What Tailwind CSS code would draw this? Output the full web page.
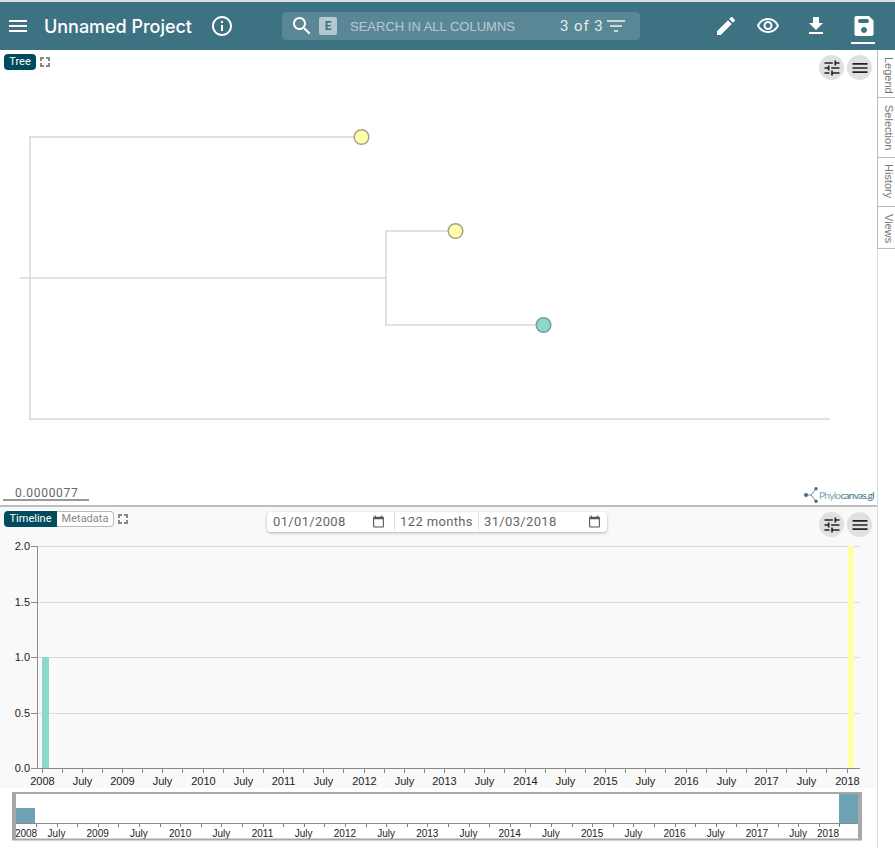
<!DOCTYPE html>
<html lang="en">
<head>
  <meta charset="UTF-8" />
  <title>Unnamed Project</title>
  <script src="https://cdn.jsdelivr.net/npm/@tailwindcss/browser@4"></script>
</head>
<body class="bg-white overflow-hidden font-['Roboto',sans-serif]">
<div class="w-[895px] h-[848px] flex flex-col">
  <div class="h-[2px] bg-[#d8dde0]"></div>

  <!-- toolbar -->
  <header class="h-[48px] bg-[#3d7283] text-white flex items-center relative">
    <svg viewBox="0 0 24 24" class="w-[24px] h-[24px] ml-[6px] fill-white"><path d="M3 18h18v-2H3v2zm0-5h18v-2H3v2zm0-7v2h18V6H3z"/></svg>
    <span class="ml-[14px] w-[150px] text-[18px] leading-[24px] font-medium font-['Inter',sans-serif] tracking-[-0.03px] whitespace-nowrap pt-[2px]">Unnamed Project</span>
    <svg viewBox="0 0 24 24" class="w-[24px] h-[24px] ml-[16px] fill-white"><path d="M11 7h2v2h-2zm0 4h2v6h-2zm1-9C6.48 2 2 6.48 2 12s4.48 10 10 10 10-4.48 10-10S17.52 2 12 2zm0 18c-4.41 0-8-3.59-8-8s3.59-8 8-8 8 3.59 8 8-3.59 8-8 8z"/></svg>
    <div class="ml-[48px] w-[358px] h-[28px] rounded bg-white/15 flex items-center">
      <svg viewBox="0 0 24 24" class="w-[24px] h-[24px] ml-[8px] fill-white"><path d="M15.5 14h-.79l-.28-.27C15.41 12.59 16 11.11 16 9.5 16 5.91 13.09 3 9.5 3S3 5.91 3 9.5 5.91 16 9.5 16c1.61 0 3.09-.59 4.23-1.57l.27.28v.79l5 4.99L20.49 19l-4.99-5zm-6 0C7.01 14 5 11.99 5 9.5S7.01 5 9.5 5 14 7.01 14 9.5 11.99 14 9.5 14z"/></svg>
      <span class="ml-[5px] w-[18px] h-[18px] rounded-[2px] bg-white/55 text-[#3d7283] text-[12px] font-bold flex items-center justify-center">E</span>
      <span class="ml-[13px] w-[210px] text-[13px] text-white/55 whitespace-nowrap font-['Liberation_Sans',sans-serif] pt-px">SEARCH IN ALL COLUMNS</span>
      <span class="text-[15px] text-white/85 tracking-[0.9px] whitespace-nowrap">3 of 3</span>
      <svg viewBox="0 0 24 24" class="w-[24px] h-[24px] ml-[1px] fill-white/70"><path d="M10 18h4v-2h-4v2zM3 6v2h18V6H3zm3 7h12v-2H6v2z"/></svg>
    </div>
    <div class="ml-auto flex items-center pr-[19px] gap-[16px]">
      <svg viewBox="0 0 24 24" class="w-[24px] h-[24px] -ml-[2px] mr-[2px] fill-white"><path d="M3 17.25V21h3.75L17.81 9.94l-3.75-3.75L3 17.25zM20.71 7.04c.39-.39.39-1.02 0-1.41l-2.34-2.34c-.39-.39-1.02-.39-1.41 0l-1.83 1.83 3.75 3.75 1.83-1.83z"/></svg>
      <svg viewBox="0 0 24 24" class="w-[24px] h-[24px] fill-white"><path d="M12 6c3.79 0 7.17 2.13 8.82 5.5C19.17 14.87 15.79 17 12 17s-7.17-2.13-8.82-5.5C4.83 8.13 8.21 6 12 6m0-2C7 4 2.73 7.11 1 11.5 2.73 15.89 7 19 12 19s9.27-3.11 11-7.5C21.27 7.11 17 4 12 4zm0 5c1.38 0 2.5 1.12 2.5 2.5S13.38 14 12 14s-2.5-1.12-2.5-2.5S10.62 9 12 9m0-2c-2.48 0-4.5 2.02-4.5 4.5S9.52 16 12 16s4.5-2.02 4.5-4.5S14.48 7 12 7z"/></svg>
      <svg viewBox="0 0 24 24" class="w-[24px] h-[24px] ml-[8px] fill-white"><path d="M19 9h-4V3H9v6H5l7 7 7-7zM5 18v2h14v-2H5z"/></svg>
      <div class="ml-[8px] relative">
        <svg viewBox="0 0 24 24" class="w-[24px] h-[24px] fill-white"><path fill-rule="evenodd" d="M17 2H4.500C3.100 2 2.500 2.900 2.500 4v16c0 1.100.6 2 2 2h15c1.100 0 2-.9 2-2V6.500L17 2zM12 19c-1.660 0-3-1.340-3-3s1.340-3 3-3 3 1.340 3 3-1.340 3-3 3zM15 9H8a2 2 0 0 1 0-4h7a2 2 0 0 1 0 4z"/></svg>
        <div class="absolute top-[28px] left-[-1px] w-[24px] h-[2px] bg-white"></div>
      </div>
    </div>
  </header>

  <div class="flex-1 flex min-h-0">
    <main class="w-[877px] flex flex-col">

      <!-- tree pane -->
      <section class="h-[455px] relative">
        <svg width="877" height="455" class="absolute inset-0" id="tree">
          <path fill="none" stroke="#d9d9d9" stroke-width="1.500" d="M20 228H386M30 86V370M29 87H355M29 369H830M386 180V276M385 181H449M385 275H536"/>
          <circle cx="361.500" cy="87" r="7.300" fill="#ffffaa" stroke="#a3a389" stroke-width="1.500"/>
          <circle cx="455.500" cy="181" r="7.300" fill="#ffffaa" stroke="#a3a389" stroke-width="1.500"/>
          <circle cx="543.500" cy="275" r="7.300" fill="#8dd8cc" stroke="#7a9c97" stroke-width="1.500"/>
        </svg>

        <div class="absolute top-[4px] left-[4px] flex items-center">
          <span class="h-[16px] w-[32px] rounded-[4px] bg-[#004b5e] text-white text-[11px] leading-[15px] text-center">Tree</span>
          <svg viewBox="0 0 10 10" class="w-[10px] h-[10px] ml-[4px] fill-[#888]"><path d="M0 0h4v2H2v2H0zM6 0h4v4H8V2H6zM0 6h2v2h2v2H0zM8 6h2v4H6V8h2z"/></svg>
        </div>

        <div class="absolute top-[5px] right-[5px] flex gap-[3px]">
          <div class="w-[25px] h-[25px] rounded-full bg-[#e0e0e0] flex items-center justify-center">
            <svg viewBox="0 0 24 24" class="w-[20px] h-[20px] fill-[#222]"><path d="M3 17v2h6v-2H3zM3 5v2h10V5H3zm10 16v-2h8v-2h-8v-2h-2v6h2zM7 9v2H3v2h4v2h2V9H7zm14 4v-2H11v2h10zm-6-4h2V7h4V5h-4V3h-2v6z"/></svg>
          </div>
          <div class="w-[25px] h-[25px] rounded-full bg-[#e0e0e0] flex items-center justify-center">
            <svg viewBox="0 0 24 24" class="w-[20px] h-[20px] fill-[#222]"><path d="M3 18h18v-2H3v2zm0-5h18v-2H3v2zm0-7v2h18V6H3z"/></svg>
          </div>
        </div>

        <div class="absolute left-[3px] top-[436px] w-[86px] h-[15px] border-b-2 border-[#999] text-[12px] leading-[14px] text-[#666] pl-[12px] tracking-[0.7px]">0.0000077</div>

        <div class="absolute left-[803px] top-[437px] flex items-center">
          <svg viewBox="0 0 16 16" class="w-[16px] h-[16px]">
            <path d="M3 8H8L13 2M8 8L13 14" stroke="#3d7283" stroke-width="0.8" fill="none"/>
            <circle cx="3" cy="8" r="2" fill="#3d7283"/><circle cx="13" cy="1.800" r="1.700" fill="#3d7283"/><circle cx="13" cy="14.200" r="1.700" fill="#3d7283"/>
          </svg>
          <span class="text-[10px] tracking-[-0.65px] text-[#7ea5b3] font-['Lato',sans-serif]">Phylo<span class="text-[#3d7283]">canvas.gl</span></span>
        </div>
      </section>

      <div class="h-[2px] bg-[#bdbdbd]"></div>

      <!-- timeline pane -->
      <section class="flex-1 relative">
        <svg width="877" height="341" class="absolute inset-0" id="timeline">
          <rect x="0" y="0" width="877" height="281" fill="#f9f9f9"/>
          <g stroke="#dcdcdc"><path d="M37 39.500H860M37 95.500H860M37 150.500H860M37 206.500H860"/></g>
          <rect x="42" y="150" width="7" height="111" fill="#8dd8cc"/>
          <rect x="848" y="39" width="6" height="222" fill="#ffffaa"/>
          <path d="M37.500 39V261.500H860" fill="none" stroke="#8a8a8a"/>
          <g id="mainAxis"></g>

          <!-- overview -->
          <rect x="16" y="287" width="842" height="45" fill="#fff"/>
          <rect x="16" y="301" width="19" height="15" fill="#6ea3b5"/>
          <rect x="839" y="287" width="19" height="29" fill="#6ea3b5"/>
          <path d="M16 316.500H858" stroke="#8a8a8a"/>
          <g id="miniAxis"></g>
          <path d="M12 286H862M12 332.500H862" stroke="#a8a8a8" stroke-width="2"/>
          <rect x="12" y="285" width="4" height="48" fill="#a8a8a8"/>
          <rect x="858" y="285" width="4" height="48" fill="#a8a8a8"/>
        </svg>

        <div class="absolute top-[4px] left-[4px] flex items-center">
          <span class="h-[16px] w-[53px] rounded-l-[4px] bg-[#004b5e] text-white text-[11px] leading-[15px] text-center">Timeline</span>
          <span class="h-[16px] w-[57px] rounded-r-[4px] bg-white border border-[#bbb] border-l-0 text-[#888] text-[11px] leading-[13px] text-center">Metadata</span>
          <svg viewBox="0 0 10 10" class="w-[10px] h-[10px] ml-[4px] fill-[#888]"><path d="M0 0h4v2H2v2H0zM6 0h4v4H8V2H6zM0 6h2v2h2v2H0zM8 6h2v4H6V8h2z"/></svg>
        </div>

        <div class="absolute top-[5px] left-[267px] w-[340px] h-[20px] rounded-[4px] bg-white shadow-[0_1px_3px_rgba(0,0,0,0.3)] flex items-center text-[13px] tracking-[0.35px] text-[#666] leading-[18px] pb-px">
          <div class="w-[128px] h-[19px] flex items-center justify-between pl-[6px] pr-[9px] border-r border-[#e0e0e0]">
            <span>01/01/2008</span>
            <svg viewBox="0 0 24 24" class="w-[13px] h-[13px] fill-[#555]"><path d="M20 3h-1V1h-2v2H7V1H5v2H4c-1.100 0-2 .9-2 2v16c0 1.100.9 2 2 2h16c1.100 0 2-.9 2-2V5c0-1.100-.9-2-2-2zm0 18H4V8h16v13z"/></svg>
          </div>
          <div class="w-[84px] h-[19px] flex items-center justify-center border-r border-[#e0e0e0] whitespace-nowrap">122 months</div>
          <div class="flex-1 h-[19px] flex items-center justify-between pl-[5px] pr-[6px]">
            <span>31/03/2018</span>
            <svg viewBox="0 0 24 24" class="w-[13px] h-[13px] fill-[#555]"><path d="M20 3h-1V1h-2v2H7V1H5v2H4c-1.100 0-2 .9-2 2v16c0 1.100.9 2 2 2h16c1.100 0 2-.9 2-2V5c0-1.100-.9-2-2-2zm0 18H4V8h16v13z"/></svg>
          </div>
        </div>

        <div class="absolute top-[5px] right-[5px] flex gap-[3px]">
          <div class="w-[25px] h-[25px] rounded-full bg-[#e0e0e0] flex items-center justify-center">
            <svg viewBox="0 0 24 24" class="w-[20px] h-[20px] fill-[#222]"><path d="M3 17v2h6v-2H3zM3 5v2h10V5H3zm10 16v-2h8v-2h-8v-2h-2v6h2zM7 9v2H3v2h4v2h2V9H7zm14 4v-2H11v2h10zm-6-4h2V7h4V5h-4V3h-2v6z"/></svg>
          </div>
          <div class="w-[25px] h-[25px] rounded-full bg-[#e0e0e0] flex items-center justify-center">
            <svg viewBox="0 0 24 24" class="w-[20px] h-[20px] fill-[#222]"><path d="M3 18h18v-2H3v2zm0-5h18v-2H3v2zm0-7v2h18V6H3z"/></svg>
          </div>
        </div>
      </section>
    </main>

    <!-- side tabs -->
    <aside class="w-[18px] flex flex-col border-l border-[#ddd] text-[11px] leading-[12px] text-[#777] font-['Liberation_Sans',sans-serif]">
      <div class="h-[48px] -ml-px border-l border-b border-[#bbb] pt-[7px] flex [writing-mode:vertical-rl]"><span class="w-[9px] ml-[5px]">Legend</span></div>
      <div class="h-[60px] -ml-px border-l border-b border-[#bbb] pt-[7px] flex [writing-mode:vertical-rl]"><span class="w-[9px] ml-[5px]">Selection</span></div>
      <div class="h-[49px] -ml-px border-l border-b border-[#bbb] pt-[6px] flex [writing-mode:vertical-rl]"><span class="w-[9px] ml-[5px]">History</span></div>
      <div class="h-[42px] -ml-px border-l border-b border-[#bbb] pt-[7px] flex [writing-mode:vertical-rl]"><span class="w-[9px] ml-[5px]">Views</span></div>
    </aside>
  </div>
</div>

<script>
  const NS = "http://www.w3.org/2000/svg";
  const FONT = "Liberation Sans, sans-serif";

  function add(parent, name, attrs, text) {
    const el = document.createElementNS(NS, name);
    Object.entries(attrs).forEach(([k, v]) => el.setAttribute(k, v));
    if (text) el.textContent = text;
    parent.appendChild(el);
  }

  // main chart: y labels
  const timeline = document.getElementById("timeline");
  [["2.0", 39], ["1.5", 95], ["1.0", 150], ["0.5", 206], ["0.0", 261]].forEach(([label, y]) => {
    add(timeline, "path", { d: `M31 ${y + .5}H37`, stroke: "#8a8a8a" });
    add(timeline, "text", { x: 30, y: y + 4, "text-anchor": "end", "font-size": 11, "font-family": FONT, fill: "#222" }, label);
  });

  // main chart: x axis
  const mainAxis = document.getElementById("mainAxis");
  for (let i = 0; i <= 40; i++) {
    const x = Math.floor(42 + i * 20.125) + .5;
    add(mainAxis, "path", { d: `M${x} 262V266`, stroke: "#8a8a8a" });
    if (i % 2) continue;
    const label = i % 4 ? "July" : String(2008 + i / 4);
    add(mainAxis, "text", { x: x, y: 278, "text-anchor": "middle", "font-size": 11, "font-family": FONT, fill: "#222" }, label);
  }

  // overview: x axis
  const miniAxis = document.getElementById("miniAxis");
  for (let i = 0; i < 40; i++) {
    const x = Math.round(36 + i * 20.6) + .5;
    add(miniAxis, "path", { d: `M${x} 317V320`, stroke: "#5f8c9c" });
  }
  add(miniAxis, "text", { x: 26, y: 330, "text-anchor": "middle", "font-size": 10, "font-family": FONT, fill: "#222" }, "2008");
  for (let k = 0; k <= 18; k++) {
    const label = k % 2 ? String(2009 + (k - 1) / 2) : "July";
    add(miniAxis, "text", { x: 56.5 + k * 41.2, y: 330, "text-anchor": "middle", "font-size": 10, "font-family": FONT, fill: "#222" }, label);
  }
  add(miniAxis, "text", { x: 828, y: 330, "text-anchor": "middle", "font-size": 10, "font-family": FONT, fill: "#222" }, "2018");
</script>
</body>
</html>
